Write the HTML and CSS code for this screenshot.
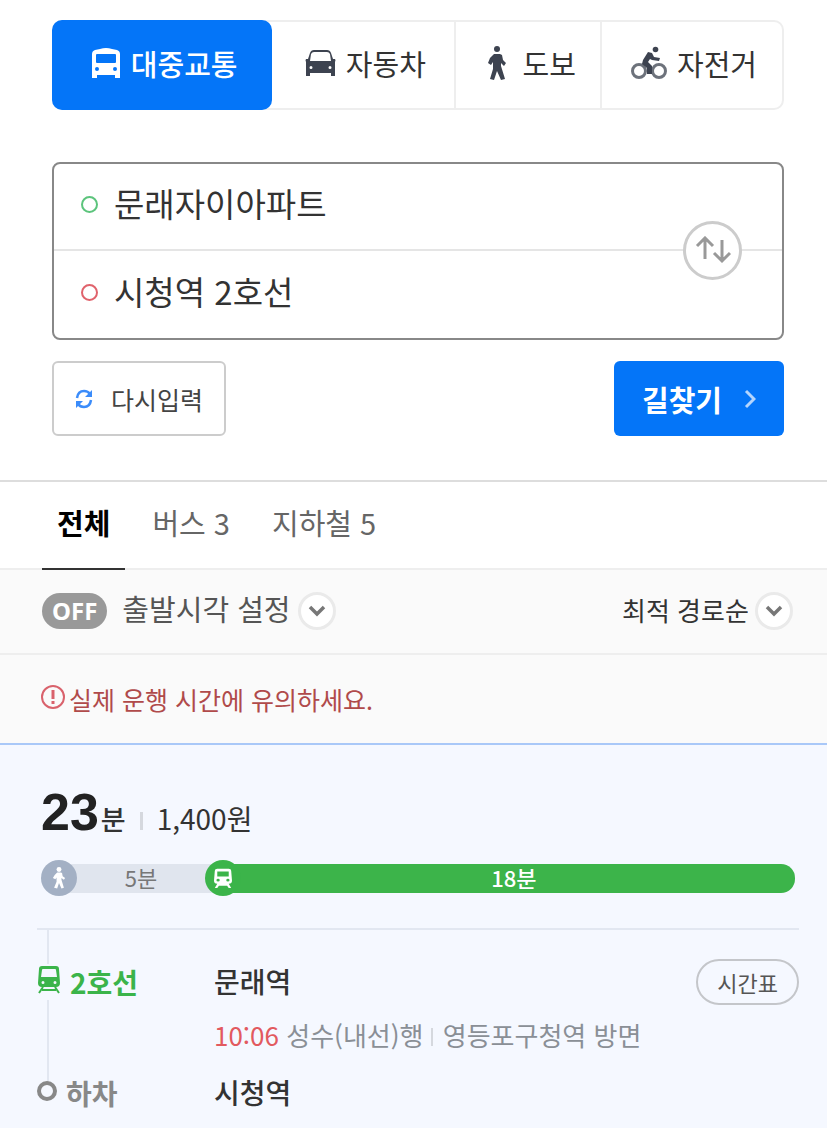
FILE: index.html
```html
<!DOCTYPE html>
<html lang="ko">
<head>
  <meta charset="UTF-8">
  <meta name="viewport" content="width=device-width, initial-scale=1">
  <title>길찾기</title>
  <link rel="stylesheet" href="styles.css">
</head>
<body>
  <!-- 검색 영역 -->
  <form class="search">
    <nav class="modes">
      <button type="button" class="mode active">
        <svg width="30" height="32" viewBox="0 0 30 32" fill="currentColor" fill-rule="evenodd">
          <path d="M9 2Q15 0 21 2L26 3Q29 4 29 7V31H24V28H6V31H1V7Q1 4 4 3ZM5 8V15Q5 16 6 16H24Q25 16 25 15V8Q25 7 24 7H6Q5 7 5 8ZM6 20A2 2 0 1 0 6 24A2 2 0 1 0 6 20ZM24 20A2 2 0 1 0 24 24A2 2 0 1 0 24 20Z"/>
        </svg>
        대중교통
      </button>
      <button type="button" class="mode">
        <svg width="31" height="28" viewBox="0 0 31 28" fill="currentColor" fill-rule="evenodd">
          <path d="M9 1H22Q25 1 26 4L28 10L30 10Q31 11 30 13V27H26V24H5V27H1V13Q0 11 1 10L3 10L5 4Q6 1 9 1ZM9 3Q7 3 6 5L5 12H26L25 5Q24 3 22 3ZM6 17A1.500 1.500 0 1 0 6 20A1.500 1.500 0 1 0 6 17ZM25 17A1.500 1.500 0 1 0 25 20A1.500 1.500 0 1 0 25 17Z"/>
        </svg>
        자동차
      </button>
      <button type="button" class="mode">
        <svg width="28" height="36" viewBox="0 0 28 36" fill="currentColor">
          <circle cx="12" cy="4" r="3"/>
          <path d="M9 9H15L17 10L18 15L21 18L19 21L16 18V21L20 34L16 35L12 26L9 35L5 34L8 24V17L6 20L3 18L5 13Z"/>
        </svg>
        도보
      </button>
      <button type="button" class="mode">
        <svg width="36" height="34" viewBox="0 0 36 34" fill="none" stroke="currentColor">
          <g stroke-width="3" opacity=".75">
            <circle cx="8" cy="25" r="6.500"/>
            <circle cx="28" cy="25" r="6.500"/>
          </g>
          <circle cx="24.500" cy="3.500" r="2.800" fill="currentColor" stroke="none"/>
          <path d="M12 14L17 6L21 7L23 11L29 12L28 15L21 14L19 13L17 16L21 20V28H16V22L11 18Z" fill="currentColor" stroke="none"/>
        </svg>
        자전거
      </button>
    </nav>

    <div class="places">
      <div class="place">
        <span class="dot start"></span>
        <input type="text" aria-label="출발지" value="문래자이아파트">
      </div>
      <div class="place">
        <span class="dot goal"></span>
        <input type="text" aria-label="도착지" value="시청역 2호선">
      </div>
      <button type="button" class="swap" aria-label="출발지와 도착지 바꾸기">
        <svg width="36" height="28" viewBox="0 0 36 28" fill="none" stroke="currentColor" stroke-width="3">
          <path d="M10 23V3M2 10L10 2L18 10M27 4V24M19 17L27 25L35 17"/>
        </svg>
      </button>
    </div>

    <div class="actions">
      <button type="reset" class="btn btn-reset">
        <svg width="18" height="20" viewBox="0 0 18 20" fill="none" stroke="currentColor" stroke-width="2.500">
          <path d="M2 9Q3 2 9 2Q13 2 15 5M16 11Q15 18 9 18Q5 18 3 15"/>
          <path d="M17 1V8H10ZM1 19V12H8Z" fill="currentColor" stroke="none"/>
        </svg>
        다시입력
      </button>
      <button type="submit" class="btn btn-find">
        길찾기
        <svg width="12" height="20" viewBox="0 0 12 20" fill="none" stroke="currentColor" stroke-width="3">
          <path d="M2 2L10 10L2 18"/>
        </svg>
      </button>
    </div>
  </form>

  <nav class="tabs">
    <a href="#all" class="tab active">전체</a>
    <a href="#bus" class="tab">버스 3</a>
    <a href="#subway" class="tab">지하철 5</a>
  </nav>

  <div class="filters">
    <button type="button" class="depart">
      <span class="toggle">OFF</span>
      <span class="depart-text">출발시각 설정</span>
      <span class="arrow">
        <svg width="18" height="12" viewBox="0 0 18 12" fill="none" stroke="currentColor" stroke-width="3.500"><path d="M2 2L9 9L16 2"/></svg>
      </span>
    </button>
    <label class="sort">
      <select aria-label="정렬">
        <option>최적 경로순</option>
      </select>
      <span class="arrow">
        <svg width="18" height="12" viewBox="0 0 18 12" fill="none" stroke="currentColor" stroke-width="3.500"><path d="M2 2L9 9L16 2"/></svg>
      </span>
    </label>
  </div>

  <p class="notice">
    <svg width="24" height="24" viewBox="0 0 24 24" fill="none" stroke="currentColor" stroke-width="2">
      <circle cx="12" cy="12" r="11"/>
      <path d="M12 5V14M12 16V19" stroke-width="3"/>
    </svg>
    실제 운행 시간에 유의하세요.
  </p>

  <!-- 경로 -->
  <section class="route">
    <div class="summary">
      <strong class="time">23</strong>
      <span class="unit">분</span>
      <span class="fare">1,400원</span>
    </div>

    <div class="bar">
      <div class="part walk" style="flex-grow: 5">
        <span class="badge">
          <svg width="16" height="22" viewBox="0 0 24 36" fill="currentColor">
            <circle cx="12" cy="4" r="4"/>
            <path d="M9 9H15L17 10L18 15L22 18L20 21L16 18V21L20 34L16 35L12 26L9 35L4 34L8 24V17L6 20L2 18L5 13Z"/>
          </svg>
        </span>
        <span class="label">5분</span>
      </div>
      <div class="part subway" style="flex-grow: 18">
        <span class="badge">
          <svg width="18" height="20" viewBox="0 0 22 28" preserveAspectRatio="none" fill="currentColor" fill-rule="evenodd">
            <path d="M4 1H18Q21 1 21 4L22 18Q22 22 18 22L21 28H18L16 25H6L4 28H1L4 22Q0 22 0 18L1 4Q1 1 4 1ZM4 5V12H18V5ZM5 15A2 2 0 1 0 5 19A2 2 0 1 0 5 15ZM17 15A2 2 0 1 0 17 19A2 2 0 1 0 17 15Z"/>
          </svg>
        </span>
        <span class="label">18분</span>
      </div>
    </div>

    <ol class="steps">
      <li class="step">
        <div class="line green">
          <span class="marker">
            <svg width="22" height="28" viewBox="0 0 22 28" fill="currentColor" fill-rule="evenodd">
              <path d="M4 0H18Q21 0 21 3L22 17Q22 21 18 21H4Q0 21 0 17L1 3Q1 0 4 0ZM5 3Q4 3 4 4L3 11H19L18 4Q18 3 17 3ZM5 15A1.500 1.500 0 1 0 5 18A1.500 1.500 0 1 0 5 15ZM17 15A1.500 1.500 0 1 0 17 18A1.500 1.500 0 1 0 17 15Z"/>
              <path d="M5 21L1 27M17 21L21 27M4 24H18" stroke="currentColor" stroke-width="2"/>
            </svg>
          </span>
          2호선
        </div>
        <div class="station">문래역</div>
        <button type="button" class="timetable">시간표</button>
        <p class="detail"><time>10:06</time> 성수(내선)행 <span class="way">영등포구청역 방면</span></p>
      </li>
      <li class="step">
        <div class="line">
          <span class="marker ring"></span>
          하차
        </div>
        <div class="station">시청역</div>
      </li>
    </ol>
  </section>
</body>
</html>
```

FILE: styles.css
```css
* {
  box-sizing: border-box;
}
body {
  margin: 0;
  min-height: 100vh;
  display: flex;
  flex-direction: column;
  background: #fff;
  color: #333;
  font-family: "Noto Sans CJK KR", sans-serif;
  font-size: 26px;
  line-height: 36px;
}
button, input, select {
  font: inherit;
  color: inherit;
  margin: 0;
  padding: 0;
  border: none;
  background: none;
}
button {
  cursor: pointer;
}
svg {
  display: block;
  flex: none;
}
p {
  margin: 0;
}

/* search */
.search {
  padding: 20px 43px 44px 52px;
}
.modes {
  display: grid;
  grid-template-columns: 6fr 5fr 4fr 5fr;
  height: 90px;
  border: 2px solid #eee;
  border-radius: 10px;
}
.mode {
  display: flex;
  align-items: center;
  justify-content: center;
  gap: 10px;
  padding: 0 0 4px 4px;
  font-size: 29px;
  color: #333;
}
.mode svg {
  color: #3d4350;
}
.mode + .mode + .mode {
  border-left: 2px solid #eee;
}
.mode.active {
  margin: -2px 0 -2px -2px;
  background: #0475f8;
  border-radius: 10px;
  color: #fff;
  font-weight: 500;
}
.mode.active svg {
  color: #fff;
}
.places {
  position: relative;
  margin-top: 52px;
  border: 2px solid #888;
  border-radius: 8px;
}
.place {
  display: flex;
  align-items: center;
  gap: 16px;
  height: 87px;
  padding: 0 110px 4px 27px;
  font-size: 33px;
}
.place:first-child {
  border-bottom: 2px solid #e5e5e5;
}
.place input {
  flex: 1;
  min-width: 0;
  height: 54px;
  padding-bottom: 4px;
  outline: none;
}
.dot {
  width: 17px;
  height: 17px;
  border: 2px solid #5cc47c;
  border-radius: 50%;
}
.dot.goal {
  border-color: #e0636c;
}
.swap {
  position: absolute;
  top: 57px;
  right: 40px;
  display: flex;
  align-items: center;
  justify-content: center;
  width: 59px;
  height: 59px;
  padding-bottom: 2px;
  border: 3px solid #ccc;
  border-radius: 50%;
  background: #fff;
  color: #999;
}
.actions {
  display: flex;
  justify-content: space-between;
  margin-top: 21px;
}
.btn {
  display: flex;
  align-items: center;
  height: 75px;
  border-radius: 6px;
}
.btn-reset {
  gap: 18px;
  padding: 0 21px;
  border: 2px solid #ccc;
  font-size: 25px;
  color: #444;
}
.btn-reset svg {
  color: #3b8cfa;
}
.btn-find {
  gap: 22px;
  padding: 0 28px;
  background: #0475f8;
  color: #fff;
  font-size: 29px;
  font-weight: 700;
}
.btn-find svg {
  color: #b4d5fd;
}

/* tabs */
.tabs {
  display: flex;
  gap: 12px;
  height: 90px;
  padding: 0 42px;
  border-top: 2px solid #ddd;
  border-bottom: 2px solid #eee;
}
.tab {
  padding: 22px 15px 0;
  margin-bottom: -2px;
  font-size: 29px;
  line-height: 36px;
  color: #666;
  text-decoration: none;
}
.tab.active {
  border-bottom: 2px solid #333;
  color: #000;
  font-weight: 700;
}

/* filters */
.filters {
  display: flex;
  align-items: center;
  justify-content: space-between;
  height: 85px;
  padding: 0 34px 2px 42px;
  background: #fafafa;
  border-bottom: 2px solid #eee;
}
.depart, .sort {
  display: flex;
  align-items: center;
}
.depart {
  font-size: 29px;
  color: #555;
}
.depart-text {
  padding-bottom: 6px;
}
.toggle {
  margin-right: 15px;
  padding: 0 10px;
  border-radius: 18px;
  background: #999;
  color: #fff;
  font-family: "Noto Sans", sans-serif;
  font-size: 24px;
  font-weight: 700;
  line-height: 36px;
}
.arrow {
  display: flex;
  align-items: center;
  justify-content: center;
  width: 38px;
  height: 38px;
  margin-left: 7px;
  border: 3px solid #eaeaea;
  border-radius: 50%;
  background: #fff;
  color: #777;
}
.sort select {
  padding-bottom: 2px;
  appearance: none;
  outline: none;
}
.notice {
  display: flex;
  align-items: center;
  gap: 4px;
  height: 88px;
  padding: 0 41px;
  background: #fafafa;
  color: #b04a4a;
  font-size: 25px;
}
.notice svg {
  margin-bottom: 4px;
  color: #d9626c;
}

/* route */
.route {
  flex: 1;
  padding: 41px 28px 8px 37px;
  background: #f5f8ff;
  border-top: 2px solid #a9c8f8;
}
.summary {
  display: flex;
  align-items: baseline;
  padding-left: 4px;
}
.time {
  font-family: "Liberation Sans", Arial, sans-serif;
  font-size: 52px;
  line-height: 52px;
  color: #222;
}
.unit {
  margin-left: 2px;
  font-size: 27px;
  font-weight: 500;
  line-height: 30px;
}
.fare {
  font-size: 28px;
  line-height: 30px;
}
.fare::before {
  content: '';
  display: inline-block;
  width: 3px;
  height: 18px;
  margin: 0 14px;
  background: #d5d8de;
}
.bar {
  display: flex;
  margin: 22px 4px 32px;
}
.part {
  flex-basis: 0;
  display: flex;
  align-items: center;
  font-size: 22px;
}
.badge {
  display: flex;
  align-items: center;
  justify-content: center;
  width: 36px;
  height: 36px;
  margin-right: -18px;
  border-radius: 50%;
  color: #fff;
  z-index: 1;
}
.label {
  flex: 1;
  height: 29px;
  padding-left: 18px;
  line-height: 26px;
  text-align: center;
}
.walk .badge {
  background: #a3b0c4;
}
.walk .label {
  margin-right: -18px;
  padding-right: 18px;
  background: #e0e5ee;
  color: #777;
}
.subway .badge {
  background: #3bb44a;
}
.subway .label {
  padding-right: 8px;
  border-radius: 0 14px 14px 0;
  background: #3cb44a;
  color: #fff;
  font-weight: 500;
}

/* steps */
.steps {
  margin: 0;
  padding: 29px 0 0;
  border-top: 2px solid #e2e7f1;
  list-style: none;
}
.step {
  position: relative;
  display: grid;
  grid-template-columns: 177px 1fr auto;
  align-items: center;
  min-height: 46px;
}
.step + .step {
  margin-top: 17px;
}
/* thin rail that joins the stops */
.step:first-child::before {
  content: '';
  position: absolute;
  top: -29px;
  bottom: -30px;
  left: 10px;
  width: 2px;
  background: #e2e7f1;
}
.line {
  position: relative;
  display: flex;
  align-items: center;
  gap: 9px;
  font-size: 28px;
  font-weight: 700;
  color: #888;
}
.line.green {
  color: #3bb44a;
}
.marker {
  padding: 2px 1px 6px;
  background: #f5f8ff;
}
.marker.ring {
  width: 20px;
  height: 20px;
  margin-bottom: 4px;
  padding: 0;
  border: 4px solid #888;
  border-radius: 50%;
}
.station {
  padding-bottom: 2px;
  font-size: 28px;
  font-weight: 500;
}
.timetable {
  height: 46px;
  padding: 0 19px;
  border: 2px solid #c4c6ca;
  border-radius: 23px;
  font-size: 22px;
  color: #555;
}
.detail {
  grid-column: 2 / -1;
  margin-top: 12px;
  color: #8a8f96;
}
.detail time {
  color: #e25a5f;
}
.way::before {
  content: '';
  display: inline-block;
  width: 2px;
  height: 18px;
  margin-right: 10px;
  background: #d5d8de;
}
```
